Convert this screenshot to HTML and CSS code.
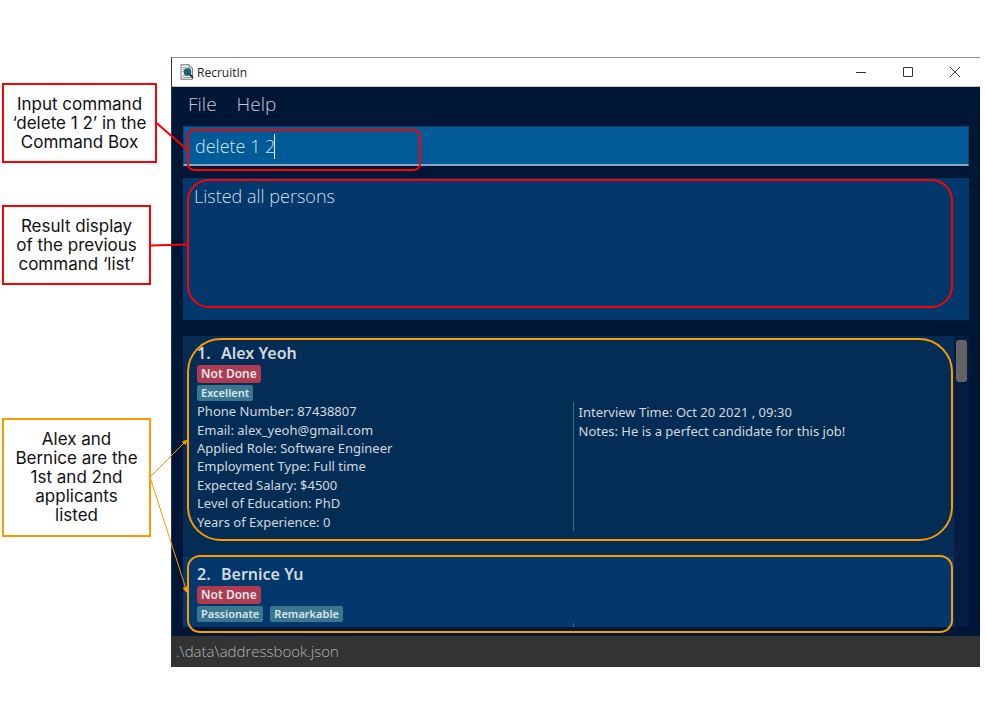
FILE: index.html
```html
<!DOCTYPE html>
<html lang="en">
<head>
<meta charset="utf-8">
<title>RecruitIn</title>
<link rel="stylesheet" href="styles.css">
</head>
<body>
<main class="figure">
  <section class="window">
    <header class="titlebar">
      <svg class="app-icon" width="14" height="16" viewBox="0 0 14 16">
        <path d="M1 .7h8L12.500 4v11.300H1z" fill="#f2f3f3" stroke="#777d80"/>
        <path d="M9 1v3h3.500" fill="none" stroke="#858b8e"/>
        <path d="M2.500 3.500h4M2.500 5.500h2M2.500 7.500h2M2.500 11.500h3M2.500 13.500h8" stroke="#9a9d9e"/>
        <circle cx="7.500" cy="8" r="3.400" fill="#0c7f9f" stroke="#20414f"/>
        <path d="M5.500 10.500q2-3 4 0M7.500 6v3" stroke="#153c4d" fill="none"/>
        <path d="M10 10.500l3 3.500" stroke="#263c47" stroke-width="2"/>
      </svg>
      <h1 class="app-name">RecruitIn</h1>
      <div class="window-controls">
        <button class="control" aria-label="Minimize"><svg width="12" height="12" viewBox="0 0 12 12"><path d="M1 6.500h10"/></svg></button>
        <button class="control" aria-label="Maximize"><svg width="12" height="12" viewBox="0 0 12 12"><path d="M1.500 1.500h9v9h-9z"/></svg></button>
        <button class="control" aria-label="Close"><svg width="12" height="12" viewBox="0 0 12 12"><path d="M1 1l10 10M11 1L1 11"/></svg></button>
      </div>
    </header>
    <nav class="menubar">
      <button class="menu">File</button>
      <button class="menu">Help</button>
    </nav>
    <div class="command">
      <input class="command-box" type="text" aria-label="Command" value="delete 1 2">
      <span class="caret"></span>
      <span class="outline outline-command"></span>
    </div>
    <div class="result">
      <p class="result-text">Listed all persons</p>
      <span class="outline outline-result"></span>
    </div>
    <div class="people">
      <div class="list">
        <article class="card">
          <h2 class="name"><span class="index">1.</span>Alex Yeoh</h2>
          <div class="tags"><span class="tag tag-status">Not Done</span></div>
          <div class="tags"><span class="tag">Excellent</span></div>
          <div class="details">
            <div class="facts">
              <p class="fact">Phone Number: 87438807</p>
              <p class="fact">Email: alex_yeoh@gmail.com</p>
              <p class="fact">Applied Role: Software Engineer</p>
              <p class="fact">Employment Type: Full time</p>
              <p class="fact">Expected Salary: $4500</p>
              <p class="fact">Level of Education: PhD</p>
              <p class="fact">Years of Experience: 0</p>
            </div>
            <div class="notes">
              <p class="note">Interview Time: Oct 20 2021 , 09:30</p>
              <p class="note">Notes: He is a perfect candidate for this job!</p>
            </div>
          </div>
        </article>
        <article class="card card-alt">
          <h2 class="name"><span class="index">2.</span>Bernice Yu</h2>
          <div class="tags"><span class="tag tag-status">Not Done</span></div>
          <div class="tags"><span class="tag">Passionate</span><span class="tag">Remarkable</span></div>
          <div class="details"><div class="facts"></div><div class="notes"></div></div>
        </article>
      </div>
      <div class="scroll-track"><div class="scroll-thumb"></div></div>
      <span class="outline outline-first"></span>
      <span class="outline outline-second"></span>
    </div>
    <footer class="status">.\data\addressbook.json</footer>
  </section>

  <aside class="callout callout-command">Input command ‘delete 1 2’ in the Command Box</aside>
  <aside class="callout callout-result">Result display of the previous command ‘list’</aside>
  <aside class="callout callout-people">Alex and Bernice are the 1st and 2nd applicants listed</aside>
  <svg class="connectors" width="200" height="640" viewBox="0 0 200 640">
    <g stroke="#ff0000" stroke-width="2" fill="none">
      <path d="M156 122.500L187 149.500M150 245.500L187 244.500"/>
    </g>
    <g stroke="#ff9900" fill="none">
      <path d="M150 477L185 442M150 477L186 589"/>
    </g>
    <path d="M187.500 439.500l-2 5.500-3.500-3.500zM187 593l-4.500-5 4.500-1.500z" fill="#ff9900"/>
  </svg>
</main>
</body>
</html>
```
FILE: styles.css
```css
* { box-sizing: border-box; }

body {
  margin: 0;
  background: #fff;
  font-family: "Open Sans", "Noto Sans", sans-serif;
}

h1, h2, p { margin: 0; }

button {
  margin: 0;
  padding: 0;
  border: 0;
  background: none;
  font: inherit;
  color: inherit;
}

.figure {
  position: relative;
  padding: 57px 5px 44px 171px;
}

.window {
  display: flex;
  flex-direction: column;
  background: #001636;
  border: 1px solid #8e9196;
  border-width: 1px 0 0 1px;
  border-left-color: #26334a;
}

.titlebar {
  display: flex;
  align-items: center;
  height: 29px;
  padding: 0 2px 0 8px;
  background: #fff;
  border-bottom: 1px solid #c5c8ce;
}

.app-name {
  margin-left: 3px;
  font-size: 12px;
  font-weight: 400;
  color: #222;
}

.window-controls { display: flex; margin-left: auto; }

.control {
  display: grid;
  place-items: center;
  width: 47px;
  height: 28px;
}

.control svg { fill: none; stroke: #333; }

.menubar {
  display: flex;
  gap: 20px;
  height: 39px;
  padding: 0 16px;
  font-size: 19px;
  font-weight: 300;
  color: #c3c8d0;
}

.menu { height: 34px; }

.command, .result, .people {
  position: relative;
  margin: 0 11px;
}

.command { margin-bottom: 12px; }

.command-box {
  display: block;
  width: 100%;
  height: 40px;
  padding: 0 11px;
  border: 1px solid #173e64;
  border-bottom: 2px solid #8aa6c2;
  background: #005b98;
  color: #d7e3ed;
  font: 300 18px "Open Sans", "Noto Sans", sans-serif;
  outline: 0;
}

.caret {
  position: absolute;
  left: 91px;
  top: 8px;
  width: 1px;
  height: 25px;
  background: #e6edf3;
}

.result {
  height: 142px;
  margin-bottom: 16px;
  padding: 6px 11px;
  background: #02386c;
  color: #d3dce5;
  font-size: 18px;
  font-weight: 300;
  line-height: 24px;
}

.people {
  display: flex;
  height: 291px;
  margin-bottom: 9px;
  font-family: "Noto Sans", "Open Sans", sans-serif;
}

.list { flex: 1; overflow: hidden; }

.card {
  height: 221px;
  padding: 6px 4px 6px 14px;
  background: #032d55;
  color: #d3d8dd;
}

.card-alt { background: #02386c; }

.name {
  height: 22px;
  margin-bottom: 1px;
  font-size: 16px;
  font-weight: 600;
  line-height: 22px;
}

.index { display: inline-block; width: 24px; }

.tags {
  display: flex;
  align-items: center;
  gap: 7px;
  height: 18px;
}

.tags + .tags { height: 19px; }

.tag {
  height: 16px;
  padding: 0 4px;
  border-radius: 2px;
  background: #3a7690;
  color: #dbe6eb;
  font-size: 11px;
  font-weight: 600;
  line-height: 15px;
}

.tag-status {
  height: 18px;
  border-radius: 3px;
  background: #ae3b50;
  font-size: 12px;
  line-height: 17px;
}

.details {
  display: grid;
  grid-template-columns: 1fr 1fr;
  height: 129px;
}

.facts, .note { font-size: 13px; }

.facts {
  display: flex;
  flex-direction: column;
  border-right: 1px solid #47698a;
}

.fact {
  display: flex;
  flex: 1;
  align-items: center;
  line-height: 18px;
}

.notes { padding: 1px 5px; }
.note { line-height: 19px; }

.scroll-track {
  width: 15px;
  padding: 4px 2px;
  background: #061d43;
}

.scroll-thumb {
  height: 42px;
  border-radius: 3px;
  background: #636363;
}

.status {
  height: 31px;
  padding-left: 4px;
  background: #323335;
  color: #b4b5b7;
  font-size: 15px;
  font-weight: 300;
  line-height: 30px;
}

.outline {
  position: absolute;
  border: 2px solid #ff0000;
  pointer-events: none;
}

.outline-command {
  left: 4px;
  top: 3px;
  width: 234px;
  height: 42px;
  border-radius: 7px;
  z-index: 1;
}

.outline-result { inset: 1px 16px 12px 4px; border-radius: 22px; }

.outline-first {
  inset: 2px 16px 86px 4px;
  border-color: #ff9900;
  border-radius: 34px;
}

.outline-second {
  inset: 219px 16px -6px 4px;
  border-color: #ff9900;
  border-radius: 13px;
}

.callout {
  position: absolute;
  left: 2px;
  display: grid;
  place-items: center;
  width: 149px;
  padding: 0 8px;
  border: 2px solid #ff0000;
  background: #fff;
  color: #111;
  font: 400 17px/19px Inter, sans-serif;
  text-align: center;
}

.callout-command { top: 83px; width: 155px; height: 80px; }
.callout-result { top: 205px; height: 80px; }
.callout-people { top: 418px; height: 119px; border-color: #ff9900; }

.connectors {
  position: absolute;
  left: 0;
  top: 0;
  pointer-events: none;
}
```
